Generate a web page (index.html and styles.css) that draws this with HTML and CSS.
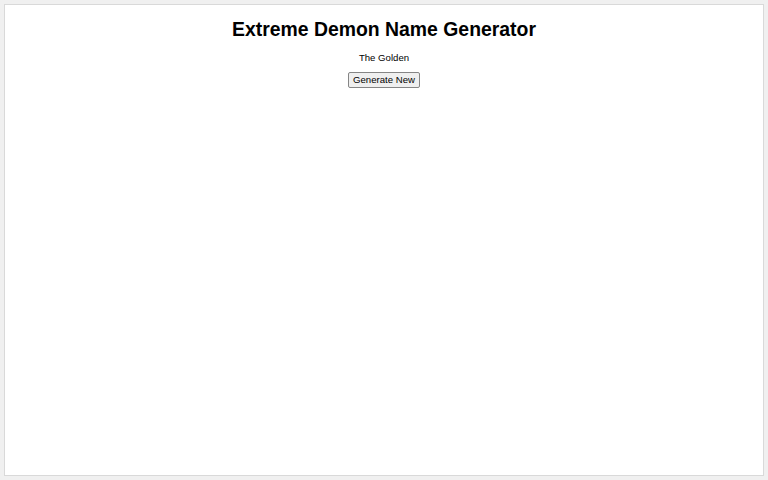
FILE: index.html
```html
<!DOCTYPE html>
<html>
<head>
<meta charset="utf-8">
<link rel="stylesheet" href="styles.css">
</head>
<body>
<div class="frame">
  <h1 class="title">Extreme Demon Name Generator</h1>
  <p class="name">The Golden</p>
  <button class="gen">Generate New</button>
</div>
</body>
</html>
```
FILE: styles.css
```css
html, body {
  margin: 0;
  padding: 0;
  background: #f0f0f0;
}
body {
  padding: 4px;
  height: 480px;
  box-sizing: border-box;
  font-family: "Liberation Sans", Arial, sans-serif;
}
.frame {
  box-sizing: border-box;
  height: 472px;
  background: #fff;
  border: 1px solid #d9d9d9;
  display: flex;
  flex-direction: column;
  align-items: center;
  color: #000;
}
.title {
  margin: 12px 0 0;
  font-size: 19.4px;
  font-weight: bold;
  line-height: 24px;
}
.name {
  margin: 11px 0 0;
  font-size: 9.6px;
  line-height: 12px;
}
.gen {
  margin-top: 8px;
  font-family: "Liberation Sans", Arial, sans-serif;
  font-size: 9.6px;
  line-height: 11px;
  padding: 1px 4px 2px;
  background: #efefef;
  border: 1px solid #858585;
  border-radius: 2px;
  color: #000;
}
```
